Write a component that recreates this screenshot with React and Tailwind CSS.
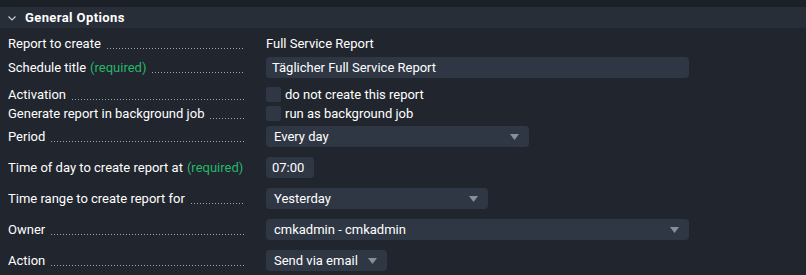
import React from 'react';

const Req = () => <span className="ml-1 text-[#25b76a]">(required)</span>;

function Label({ children }) {
  return (
    <div className="flex w-[237px] shrink-0 items-end whitespace-nowrap leading-4">
      <span className="shrink-0">{children}</span>
      <span className="mb-[3px] ml-[6px] h-px min-w-0 flex-1 bg-[linear-gradient(to_right,#a0a6ae_1px,transparent_1px)] bg-[length:3px_1px] bg-repeat-x" />
    </div>
  );
}

function Select({ width, value }) {
  return (
    <div className={`flex h-[21px] items-center justify-between rounded-[4px] bg-[#2f3744] pl-2 pr-[10px] ${width}`}>
      <span>{value}</span>
      <svg width="9" height="6" viewBox="0 0 9 6"><path d="M0 0h9L4.5 6z" fill="#8a8f96" /></svg>
    </div>
  );
}

function Check({ label }) {
  return (
    <div className="flex items-center gap-1">
      <div className="h-[15px] w-[15px] rounded-[2px] bg-[#2f3744]" />
      <span>{label}</span>
    </div>
  );
}

function Row({ label, children, className = '' }) {
  return (
    <div className={`flex items-center pl-2 ${className}`}>
      <Label>{label}</Label>
      <div className="ml-[21px]">{children}</div>
    </div>
  );
}

export default function App() {
  return (
    <div className="h-[275px] w-[806px] overflow-hidden bg-[#21262e] text-[13px] text-white" style={{ fontFamily: 'Roboto, "Liberation Sans", sans-serif' }}>
      <div className="h-[7px] bg-[#1c2027]" />
      <div className="flex h-[21px] items-center bg-[#272e38] pl-2">
        <svg width="8" height="5" viewBox="0 0 8 5" className="mt-[1px]"><path d="M0.5 0.5L4 4L7.5 0.5" stroke="#c8ccd2" strokeWidth="1.2" fill="none" /></svg>
        <span className="ml-[9px] text-[13px] font-bold tracking-[0.4px]">General Options</span>
      </div>

      <div className="flex flex-col pt-2">
        <Row label="Report to create" className="h-4">
          <span>Full Service Report</span>
        </Row>
        <Row label={<>Schedule title<Req /></>} className="mt-[5px]">
          <div className="flex h-[21px] w-[423px] items-center rounded-[4px] bg-[#2f3744] pl-[6px]">Täglicher Full Service Report</div>
        </Row>
        <Row label="Activation" className="mt-[7px] h-[19px]">
          <Check label="do not create this report" />
        </Row>
        <Row label="Generate report in background job" className="h-[19px]">
          <Check label="run as background job" />
        </Row>
        <Row label="Period" className="mt-[3px]">
          <Select width="w-[263px]" value="Every day" />
        </Row>
        <Row label={<>Time of day to create report at<Req /></>} className="mt-[10px]">
          <div className="flex h-[21px] w-[48px] items-center rounded-[4px] bg-[#2f3744] pl-[6px]">07:00</div>
        </Row>
        <Row label="Time range to create report for" className="mt-[10px]">
          <Select width="w-[222px]" value="Yesterday" />
        </Row>
        <Row label="Owner" className="mt-[10px]">
          <Select width="w-[423px]" value="cmkadmin - cmkadmin" />
        </Row>
        <Row label="Action" className="mt-[10px]">
          <Select width="w-[121px]" value="Send via email" />
        </Row>
      </div>
    </div>
  );
}
